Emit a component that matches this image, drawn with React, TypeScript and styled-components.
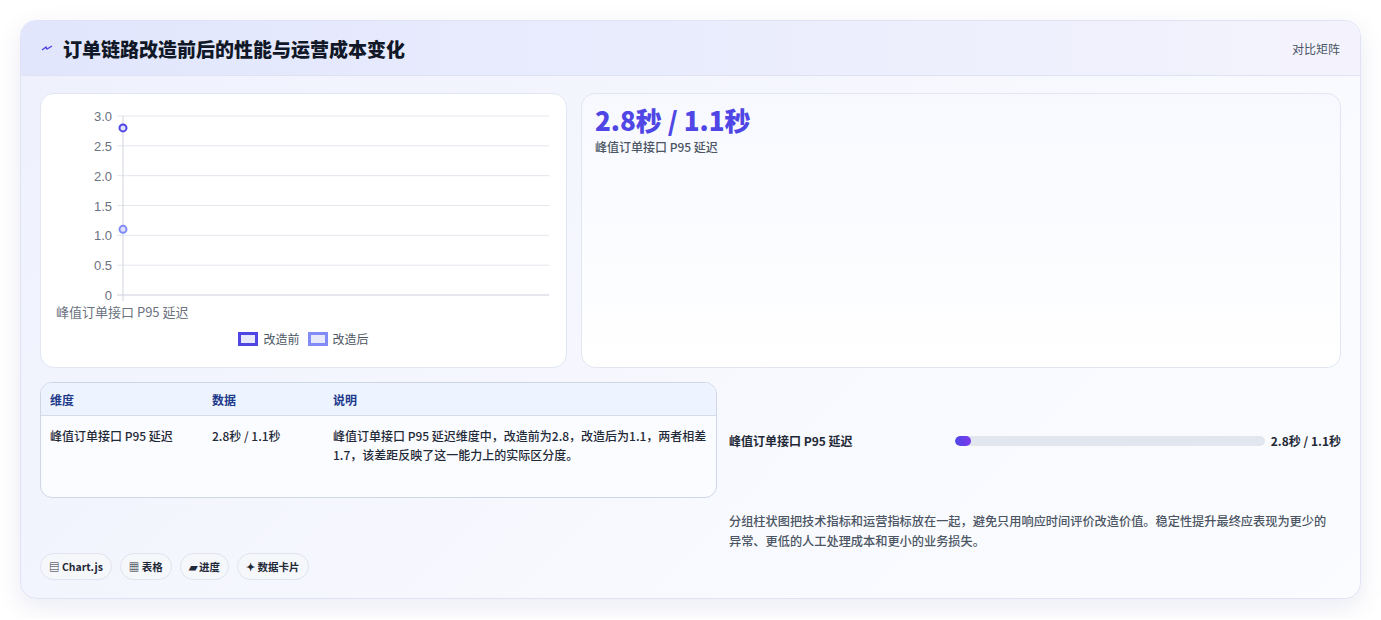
import React from 'react';
import styled, { createGlobalStyle } from 'styled-components';

const Global = createGlobalStyle`
  body {
    margin: 0;
    background: #ffffff;
    font-family: "Noto Sans CJK SC", "Noto Sans", sans-serif;
  }
`;

const Page = styled.div`
  padding: 20px 20px 20px 20px;
`;

const Card = styled.div`
  border: 1px solid #dfe3f5;
  border-radius: 16px;
  background: linear-gradient(135deg, #eef0fd 0%, #f8f9fe 60%, #fbfcff 100%);
  box-shadow: 0 8px 24px rgba(80, 90, 160, 0.12);
  overflow: hidden;
`;

const Header = styled.div`
  height: 54px;
  display: flex;
  align-items: center;
  justify-content: space-between;
  padding: 0 20px;
  background: linear-gradient(90deg, #e1e6fd 0%, #eceefd 60%, #f4f3fd 100%);
  border-bottom: 1px solid #dde3f5;
`;

const Title = styled.h2`
  margin: 0;
  display: flex;
  align-items: center;
  gap: 10px;
  font-size: 19px;
  font-weight: 800;
  color: #111827;
`;

const HeaderTag = styled.span`
  font-size: 12px;
  color: #4b5563;
`;

const Body = styled.div`
  padding: 17px 19px 18px 19px;
  display: flex;
  flex-direction: column;
`;

const TopRow = styled.div`
  display: grid;
  grid-template-columns: 527px 1fr;
  gap: 14px;
  height: 275px;
`;

const Panel = styled.div`
  background: #ffffff;
  border: 1px solid #e2e6f3;
  border-radius: 14px;
  position: relative;
`;

const MetricPanel = styled(Panel)`
  background: linear-gradient(180deg, #f7f9ff 0%, #ffffff 100%);
  padding: 10px 13px;
`;

const BigValue = styled.div`
  font-size: 26px;
  font-weight: 800;
  color: #4f46e5;
  line-height: 32px;
`;

const SubLabel = styled.div`
  font-size: 12px;
  color: #4b5563;
  font-weight: 500;
  margin-top: 2px;
`;

const BottomRow = styled.div`
  display: grid;
  grid-template-columns: 677px 1fr;
  gap: 12px;
  margin-top: 14px;
`;

const TableBox = styled.div`
  border: 1px solid #cfd6e6;
  border-radius: 12px;
  overflow: hidden;
  background: #fbfcff;
  height: 114px;
`;

const Table = styled.table`
  width: 100%;
  border-collapse: collapse;
  font-size: 12px;
  th {
    text-align: left;
    font-weight: 700;
    color: #1e3a8a;
    background: #eef4ff;
    padding: 0 9px;
    height: 32px;
    border-bottom: 1px solid #d5dcea;
  }
  td {
    vertical-align: top;
    padding: 10px 9px;
    color: #1f2937;
    font-weight: 500;
    line-height: 19px;
  }
`;

const Side = styled.div`
  display: flex;
  flex-direction: column;
`;

const ProgressRow = styled.div`
  display: grid;
  grid-template-columns: 226px 310px 1fr;
  align-items: center;
  margin-top: 50px;
  font-size: 12px;
  font-weight: 700;
  color: #1f2937;
`;

const Track = styled.div`
  height: 10px;
  border-radius: 5px;
  background: #e2e6ef;
  overflow: hidden;
`;

const Fill = styled.div`
  height: 100%;
  border-radius: 5px;
  background: linear-gradient(90deg, #4f46e5, #7c3aed);
`;

const ProgressValue = styled.span`
  text-align: right;
`;

const Note = styled.p`
  margin: 62px 0 0;
  padding-right: 4px;
  font-size: 12.2px;
  line-height: 20px;
  color: #4b5563;
  font-weight: 500;
`;

const Chips = styled.div`
  display: flex;
  gap: 8px;
  margin-top: 2px;
`;

const Chip = styled.span`
  font-size: 10.5px;
  font-weight: 600;
  color: #1f2937;
  background: #f5f7fb;
  border: 1px solid #dfe3ee;
  border-radius: 14px;
  padding: 5px 8px;
`;

const Legend = styled.div`
  position: absolute;
  left: 0;
  right: 0;
  top: 236px;
  display: flex;
  justify-content: center;
  gap: 8px;
  font-size: 12px;
  color: #4b5563;
`;

const LegendItem = styled.span`
  display: flex;
  align-items: center;
  gap: 5px;
`;

const Swatch = styled.span<{ $c: string }>`
  width: 20px;
  height: 14px;
  border: 3px solid ${p => p.$c};
  background: #e8e8fb;
  box-sizing: border-box;
`;

const ticks = ['3.0', '2.5', '2.0', '1.5', '1.0', '0.5', '0'];

const Chart = () => {
  const top = 22;
  const bottom = 201;
  const x0 = 82;
  const x1 = 508;
  const y = (v: number) => bottom - (v / 3) * (bottom - top);
  return (
    <svg width="527" height="230" style={{ position: 'absolute', left: 0, top: 0 }}>
      {ticks.map((t, i) => {
        const yy = top + i * ((bottom - top) / 6);
        return (
          <g key={t}>
            <line x1={x0 - 6} x2={x1} y1={yy} y2={yy} stroke={i === 6 ? '#cbd0dc' : '#e3e6ee'} />
            <text x={x0 - 11} y={yy + 5} fontSize="13" textAnchor="end" fill="#6b7280" fontFamily="Liberation Sans, sans-serif">{t}</text>
          </g>
        );
      })}
      <line x1={x0} x2={x0} y1={top} y2={bottom + 6} stroke="#d1d5e0" />
      <circle cx={x0} cy={y(2.8)} r="3.5" fill="#e0e0fb" stroke="#4f46e5" strokeWidth="2" />
      <circle cx={x0} cy={y(1.1)} r="3.5" fill="#e0e0fb" stroke="#818cf8" strokeWidth="2" />
      <text x="15" y="223" fontSize="13" fill="#6b7280" fontFamily="Noto Sans CJK SC, sans-serif">峰值订单接口 P95 延迟</text>
    </svg>
  );
};

export default function App() {
  return (
    <Page>
      <Global />
      <Card>
        <Header>
          <Title>
            <svg width="12" height="8" viewBox="0 0 12 8">
              <path d="M1 6 L5 3 L6 5 L11 2" stroke="#4f46e5" strokeWidth="1.4" fill="none" />
            </svg>
            订单链路改造前后的性能与运营成本变化
          </Title>
          <HeaderTag>对比矩阵</HeaderTag>
        </Header>
        <Body>
          <TopRow>
            <Panel>
              <Chart />
              <Legend>
                <LegendItem><Swatch $c="#4f46e5" />改造前</LegendItem>
                <LegendItem><Swatch $c="#818cf8" />改造后</LegendItem>
              </Legend>
            </Panel>
            <MetricPanel>
              <BigValue>2.8秒 / 1.1秒</BigValue>
              <SubLabel>峰值订单接口 P95 延迟</SubLabel>
            </MetricPanel>
          </TopRow>
          <BottomRow>
            <TableBox>
              <Table>
                <thead>
                  <tr>
                    <th style={{ width: 144 }}>维度</th>
                    <th style={{ width: 103 }}>数据</th>
                    <th>说明</th>
                  </tr>
                </thead>
                <tbody>
                  <tr>
                    <td>峰值订单接口 P95 延迟</td>
                    <td>2.8秒 / 1.1秒</td>
                    <td>峰值订单接口 P95 延迟维度中，改造前为2.8，改造后为1.1，两者相差1.7，该差距反映了这一能力上的实际区分度。</td>
                  </tr>
                </tbody>
              </Table>
            </TableBox>
            <Side>
              <ProgressRow>
                <span>峰值订单接口 P95 延迟</span>
                <Track><Fill style={{ width: '5%' }} /></Track>
                <ProgressValue>2.8秒 / 1.1秒</ProgressValue>
              </ProgressRow>
              <Note>分组柱状图把技术指标和运营指标放在一起，避免只用响应时间评价改造价值。稳定性提升最终应表现为更少的异常、更低的人工处理成本和更小的业务损失。</Note>
            </Side>
          </BottomRow>
          <Chips>
            <Chip>▤ Chart.js</Chip>
            <Chip>▦ 表格</Chip>
            <Chip>▰ 进度</Chip>
            <Chip>✦ 数据卡片</Chip>
          </Chips>
        </Body>
      </Card>
    </Page>
  );
}
